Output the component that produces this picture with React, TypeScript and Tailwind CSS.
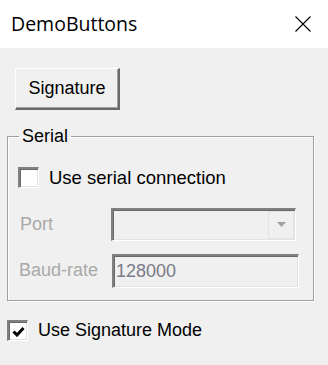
import React, { useState } from 'react';

const raised =
  'border-t border-l border-t-white border-l-white border-r-2 border-b-2 border-r-[#696969] border-b-[#696969] shadow-[inset_-1px_-1px_0_#a0a0a0]';
const sunken =
  'border-t-2 border-l-2 border-t-[#808080] border-l-[#808080] border-r border-b border-r-white border-b-white shadow-[inset_1px_1px_0_#696969,inset_-1px_-1px_0_#e3e3e3]';

const CheckBox: React.FC<{ checked: boolean; onToggle: () => void }> = ({ checked, onToggle }) => (
  <button
    type="button"
    onClick={onToggle}
    className={`w-[21px] h-[21px] bg-white flex items-center justify-center shrink-0 ${sunken}`}
  >
    {checked && (
      <svg width="13" height="11" viewBox="0 0 13 11">
        <path d="M1.5 5.5 L5 9 L11.5 2" fill="none" stroke="#000" strokeWidth="3" />
      </svg>
    )}
  </button>
);

const App: React.FC = () => {
  const [useSerial, setUseSerial] = useState(false);
  const [signatureMode, setSignatureMode] = useState(true);

  return (
    <div
      className="w-[328px] h-[365px] bg-[#f0f0f0] flex flex-col text-black"
      style={{ fontFamily: '"Liberation Sans", Arial, sans-serif' }}
    >
      {/* title bar */}
      <div className="h-[48px] bg-white flex items-center justify-between pl-[11px] pr-[17px] shrink-0">
        <span className="text-[19.5px] font-['Open_Sans',sans-serif]">DemoButtons</span>
        <svg width="16" height="16" viewBox="0 0 16 16">
          <path d="M0.5 0.5 L15.5 15.5 M15.5 0.5 L0.5 15.5" stroke="#000" strokeWidth="1.1" />
        </svg>
      </div>

      <div className="flex flex-col pl-[7px] pr-[14px]">
        <button
          type="button"
          className={`ml-[8px] mt-[20px] w-[105px] h-[42px] bg-[#f0f0f0] text-[18px] flex items-center justify-center ${raised}`}
        >
          Signature
        </button>

        <fieldset className="mt-[14px] h-[177px] border border-[#a0a0a0] shadow-[1px_1px_0_#fff,inset_1px_1px_0_#fff] px-[10px]">
          <legend className="ml-[1px] px-[3px] text-[18px] leading-[24px]">Serial</legend>

          <label className="flex items-center gap-[10px] mt-[16px] text-[18.5px]">
            <CheckBox checked={useSerial} onToggle={() => setUseSerial(!useSerial)} />
            <span>Use serial connection</span>
          </label>

          <div className="flex items-center mt-[16px]">
            <span className="w-[93px] pl-[2px] text-[18px] text-[#a9a9a9]">Port</span>
            <div className={`w-[185px] h-[33px] bg-[#f0f0f0] flex justify-end items-stretch ${sunken}`}>
              <div className="w-[26px] my-[1px] mr-[1px] border border-[#e3e3e3] flex items-center justify-center">
                <svg width="9" height="5" viewBox="0 0 9 5">
                  <path d="M0 0 H9 L4.5 5 Z" fill="#a0a0a0" />
                </svg>
              </div>
            </div>
          </div>

          <div className="flex items-center mt-[13px]">
            <span className="w-[94px] pl-[1px] text-[18px] text-[#a9a9a9]">Baud-rate</span>
            <div className={`w-[187px] h-[34px] bg-[#f0f0f0] flex items-center pl-[2px] text-[18px] text-[#7a7a88] ${sunken}`}>
              128000
            </div>
          </div>
        </fieldset>

        <label className="flex items-center gap-[10px] mt-[16px] text-[18px]">
          <CheckBox checked={signatureMode} onToggle={() => setSignatureMode(!signatureMode)} />
          <span>Use Signature Mode</span>
        </label>
      </div>
    </div>
  );
};

export default App;
